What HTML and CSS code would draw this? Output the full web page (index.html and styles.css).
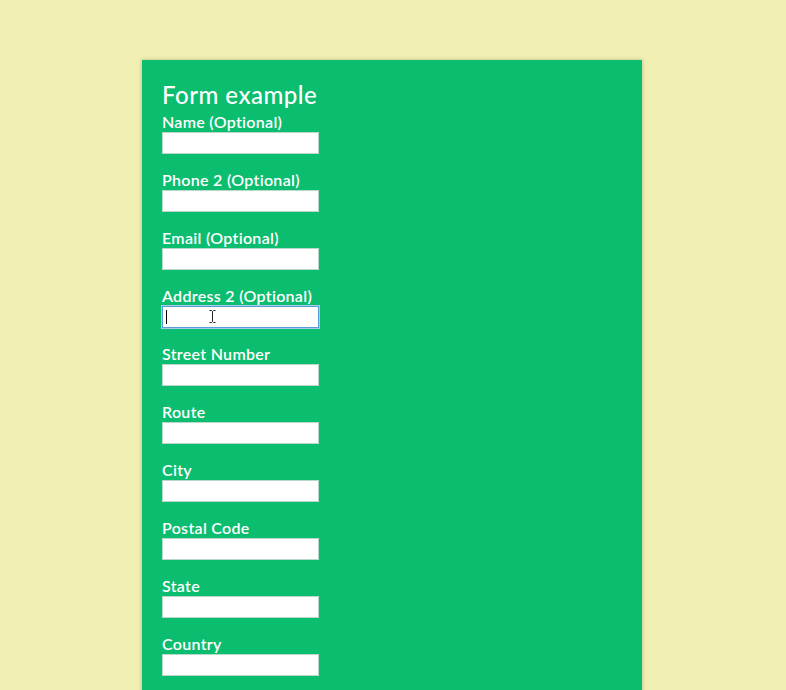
FILE: index.html
```html
<!DOCTYPE html>
<html>
<head>
<meta charset="utf-8">
<link rel="stylesheet" href="styles.css">
</head>
<body>
<div class="card">
  <h1 class="title">Form example</h1>
  <form class="form">
    <div class="field"><label class="label">Name (Optional)</label><input class="input" type="text"></div>
    <div class="field"><label class="label">Phone 2 (Optional)</label><input class="input" type="text"></div>
    <div class="field"><label class="label">Email (Optional)</label><input class="input" type="text"></div>
    <div class="field"><label class="label">Address 2 (Optional)</label>
      <div class="input focused"><span class="caret"></span>
        <svg class="ibeam" width="7" height="13" viewBox="0 0 7 13"><path d="M0.5 0.5h2l1 1 1-1h2M3.5 1.5v10M0.5 12.5h2l1-1 1 1h2" fill="none" stroke="#222" stroke-width="1"/></svg>
      </div>
    </div>
    <div class="field"><label class="label">Street Number</label><input class="input" type="text"></div>
    <div class="field"><label class="label">Route</label><input class="input" type="text"></div>
    <div class="field"><label class="label">City</label><input class="input" type="text"></div>
    <div class="field"><label class="label">Postal Code</label><input class="input" type="text"></div>
    <div class="field"><label class="label">State</label><input class="input" type="text"></div>
    <div class="field"><label class="label">Country</label><input class="input" type="text"></div>
  </form>
</div>
</body>
</html>
```
FILE: styles.css
```css
html, body {
  margin: 0;
  padding: 0;
}
body {
  background: #f2efb4;
  font-family: Lato, "Open Sans", sans-serif;
  overflow: hidden;
  padding-right: 2px;
}
.card {
  width: 460px;
  margin: 60px auto 0;
  padding: 20px 20px 40px;
  background: #0bbd6e;
  box-shadow: 0 0 4px rgba(0,0,0,0.25);
  color: #fff;
}
.title {
  margin: 0;
  font-size: 24px;
  line-height: 30px;
  font-weight: 500;
  letter-spacing: 0.5px;
}
.form {
  display: flex;
  flex-direction: column;
  gap: 16px;
  margin-top: 2px;
}
.field {
  display: flex;
  flex-direction: column;
  align-items: flex-start;
}
.label {
  font-size: 16px;
  line-height: 20px;
  font-weight: 600;
  letter-spacing: 0.3px;
}
.input {
  box-sizing: border-box;
  width: 157px;
  height: 22px;
  margin: 0;
  padding: 0;
  border: 1px solid #b9d9c8;
  background: #fff;
  font: inherit;
}
.focused {
  position: relative;
  border: 1px solid #5a9bd8;
  box-shadow: 0 0 0 1px #a8cbed;
}
.caret {
  position: absolute;
  left: 3px;
  top: 3px;
  width: 1px;
  height: 14px;
  background: #000;
}
.ibeam {
  position: absolute;
  left: 46px;
  top: 3px;
}
```
